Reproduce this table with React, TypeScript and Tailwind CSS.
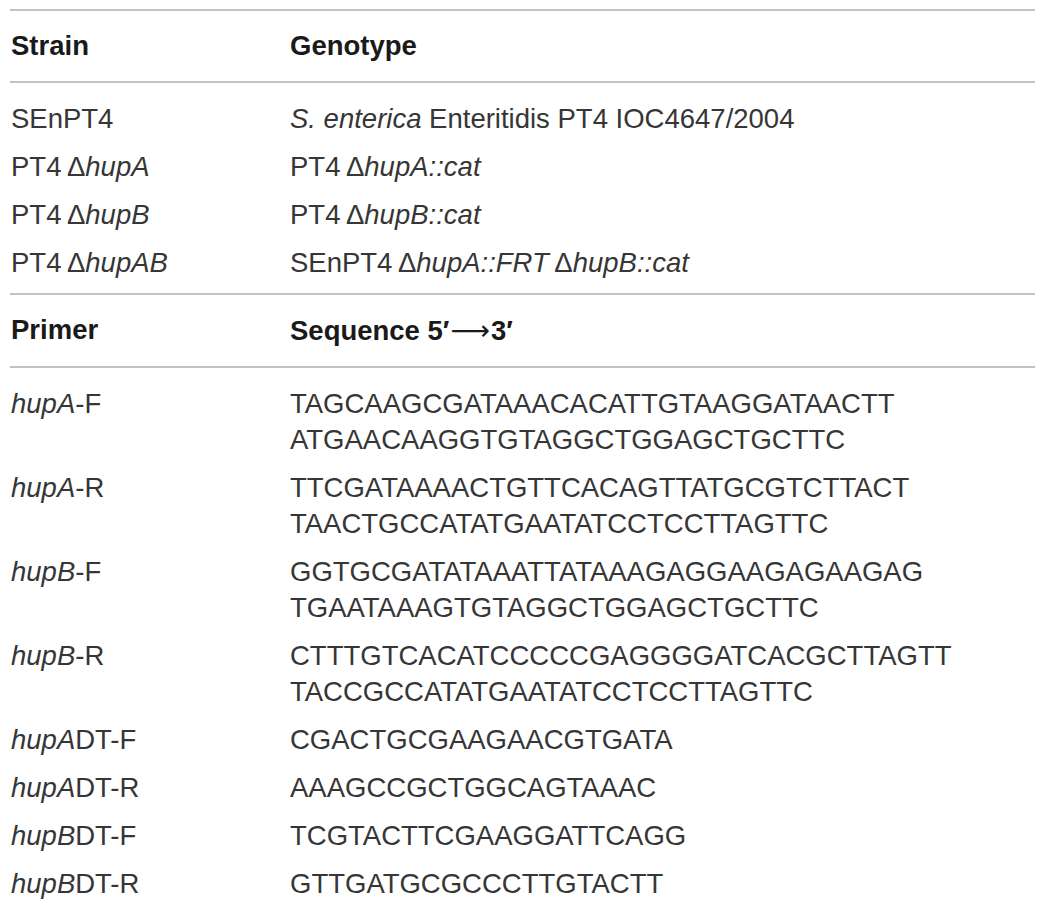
import React from "react";

const strains = [
  { name: <>SEnPT4</>, geno: <><i>S. enterica</i> Enteritidis PT4 IOC4647/2004</> },
  { name: <>PT4{"\u2009"}Δ<i>hupA</i></>, geno: <>PT4{"\u2009"}Δ<i>hupA::cat</i></> },
  { name: <>PT4{"\u2009"}Δ<i>hupB</i></>, geno: <>PT4{"\u2009"}Δ<i>hupB::cat</i></> },
  {
    name: <>PT4{"\u2009"}Δ<i>hupAB</i></>,
    geno: <>SEnPT4{"\u2009"}Δ<i>hupA::FRT</i>{"\u2009"}Δ<i>hupB::cat</i></>,
  },
];

const primers = [
  { name: "hupA", tail: "-F", seq: ["TAGCAAGCGATAAACACATTGTAAGGATAACTT", "ATGAACAAGGTGTAGGCTGGAGCTGCTTC"] },
  { name: "hupA", tail: "-R", seq: ["TTCGATAAAACTGTTCACAGTTATGCGTCTTACT", "TAACTGCCATATGAATATCCTCCTTAGTTC"] },
  { name: "hupB", tail: "-F", seq: ["GGTGCGATATAAATTATAAAGAGGAAGAGAAGAG", "TGAATAAAGTGTAGGCTGGAGCTGCTTC"] },
  { name: "hupB", tail: "-R", seq: ["CTTTGTCACATCCCCCGAGGGGATCACGCTTAGTT", "TACCGCCATATGAATATCCTCCTTAGTTC"] },
  { name: "hupA", tail: "DT-F", seq: ["CGACTGCGAAGAACGTGATA"] },
  { name: "hupA", tail: "DT-R", seq: ["AAAGCCGCTGGCAGTAAAC"] },
  { name: "hupB", tail: "DT-F", seq: ["TCGTACTTCGAAGGATTCAGG"] },
  { name: "hupB", tail: "DT-R", seq: ["GTTGATGCGCCCTTGTACTT"] },
];

const HeadRow = ({ a, b }: { a: React.ReactNode; b: React.ReactNode }) => (
  <div className="grid grid-cols-[280px_1fr] border-y-2 border-[#c2c2c2] py-[17px] font-bold leading-[36px] text-[#1a1a1a]">
    <div className="pl-[1px]">{a}</div>
    <div>{b}</div>
  </div>
);

const App: React.FC = () => {
  return (
    <div
      className="min-h-[917px] bg-white pl-[10px] pr-[16px] pt-[9px] text-[27.5px] text-[#363636]"
      style={{ fontFamily: '"Liberation Sans", Arial, sans-serif' }}
    >
      <HeadRow a="Strain" b="Genotype" />
      <div className="pt-[12px] pb-[8px]">
        {strains.map((s, i) => (
          <div key={i} className="grid grid-cols-[280px_1fr] py-[6px] leading-[36px]">
            <div className="pl-[1px]">{s.name}</div>
            <div>{s.geno}</div>
          </div>
        ))}
      </div>
      <div className="-mt-[2px]">
        <HeadRow
          a="Primer"
          b={
            <>
              Sequence 5′
              <span className="px-[1px] font-normal" style={{ fontFamily: '"DejaVu Sans", sans-serif' }}>
                ⟶
              </span>
              3′
            </>
          }
        />
      </div>
      <div className="pt-[12px]">
        {primers.map((p, i) => (
          <div key={i} className="grid grid-cols-[280px_1fr] py-[6px] leading-[36px]">
            <div className="pl-[1px]">
              <i>{p.name}</i>
              {p.tail}
            </div>
            <div>
              {p.seq.map((l) => (
                <div key={l}>{l}</div>
              ))}
            </div>
          </div>
        ))}
      </div>
    </div>
  );
};

export default App;
